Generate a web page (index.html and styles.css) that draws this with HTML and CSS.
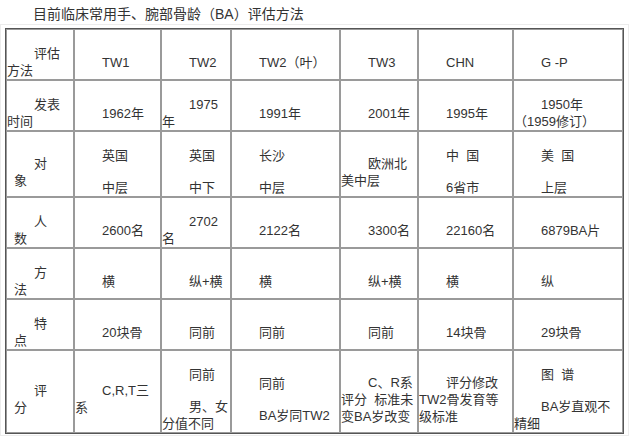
FILE: index.html
```html
<!DOCTYPE html>
<html lang="zh-CN">
<head>
<meta charset="utf-8">
<title>骨龄评估方法</title>
<link rel="stylesheet" href="styles.css">
</head>
<body>
<p class="title">目前临床常用手、腕部骨龄（BA）评估方法</p>
<div class="frame">
<table class="ba">
<colgroup>
<col class="c1"><col class="c2"><col class="c3"><col class="c4"><col class="c5"><col class="c6"><col class="c7">
</colgroup>
<tr>
<th><p>评估<br>方法</p></th>
<td><p>TW1</p></td>
<td><p>TW2</p></td>
<td><p>TW2（叶）</p></td>
<td><p>TW3</p></td>
<td><p>CHN</p></td>
<td><p>G -P</p></td>
</tr>
<tr>
<th><p>发表<br>时间</p></th>
<td><p>1962年</p></td>
<td><p>1975<br>年</p></td>
<td><p>1991年</p></td>
<td><p>2001年</p></td>
<td><p>1995年</p></td>
<td><p>1950年<br>（1959修订）</p></td>
</tr>
<tr>
<th><p>对<br><span class="shift">象</span></p></th>
<td><p>英国</p><p>中层</p></td>
<td><p>英国</p><p>中下</p></td>
<td><p>长沙</p><p>中层</p></td>
<td><p>欧洲北<br>美中层</p></td>
<td><p>中&nbsp;&nbsp;国</p><p>6省市</p></td>
<td><p>美&nbsp;&nbsp;国</p><p>上层</p></td>
</tr>
<tr>
<th><p>人<br><span class="shift">数</span></p></th>
<td><p>2600名</p></td>
<td><p>2702<br>名</p></td>
<td><p>2122名</p></td>
<td><p>3300名</p></td>
<td><p>22160名</p></td>
<td><p>6879BA片</p></td>
</tr>
<tr>
<th><p>方<br><span class="shift">法</span></p></th>
<td><p>横</p></td>
<td><p>纵+横</p></td>
<td><p>横</p></td>
<td><p>纵+横</p></td>
<td><p>横</p></td>
<td><p>纵</p></td>
</tr>
<tr>
<th><p>特<br><span class="shift">点</span></p></th>
<td><p>20块骨</p></td>
<td><p>同前</p></td>
<td><p>同前</p></td>
<td><p>同前</p></td>
<td><p>14块骨</p></td>
<td><p>29块骨</p></td>
</tr>
<tr>
<th><p>评<br><span class="shift">分</span></p></th>
<td><p>C,R,T三<br>系</p></td>
<td><p>同前</p><p>男、女<br>分值不同</p></td>
<td><p>同前</p><p>BA岁同TW2</p></td>
<td><p>C、R系<br>评分&nbsp;&nbsp;标准未<br>变BA岁改变</p></td>
<td><p>评分修改<br>TW2骨发育等<br>级标准</p></td>
<td><p>图&nbsp;&nbsp;谱</p><p>BA岁直观不<br>精细</p></td>
</tr>
</table>
</div>
</body>
</html>
```
FILE: styles.css
```css
html, body {
  background: #ffffff;
}
body {
  margin: 4px 0 0 0;
  font-family: "Liberation Sans", "Noto Sans CJK SC", sans-serif;
  color: #333333;
}
.title {
  margin: 0;
  padding-left: 5px;
  text-indent: 28px;
  font-size: 14px;
  line-height: 20px;
  color: #333333;
}
.frame {
  width: fit-content;
  border: 1px solid #ececec;
  padding: 3px 4px 1px 4px;
}
.ba {
  table-layout: fixed;
  width: 619px;
  border-collapse: separate;
  border-spacing: 0;
  border: 1px solid #555555;
  font-size: 13px;
  line-height: 17px;
}
.c1 { width: 68px; }
.c2 { width: 87px; }
.c3 { width: 70px; }
.c4 { width: 109px; }
.c5 { width: 78px; }
.c6 { width: 95px; }
.c7 { width: 110px; }
.ba th,
.ba td {
  border: 1px solid #9a9a9a;
  padding: 15px 0 0 0;
  vertical-align: middle;
  text-align: left;
  font-weight: normal;
  white-space: nowrap;
  overflow: hidden;
}
.ba p {
  margin: 0;
  text-indent: 27px;
}
.ba p + p {
  margin-top: 15px;
}
.shift {
  padding-left: 7px;
}
```
